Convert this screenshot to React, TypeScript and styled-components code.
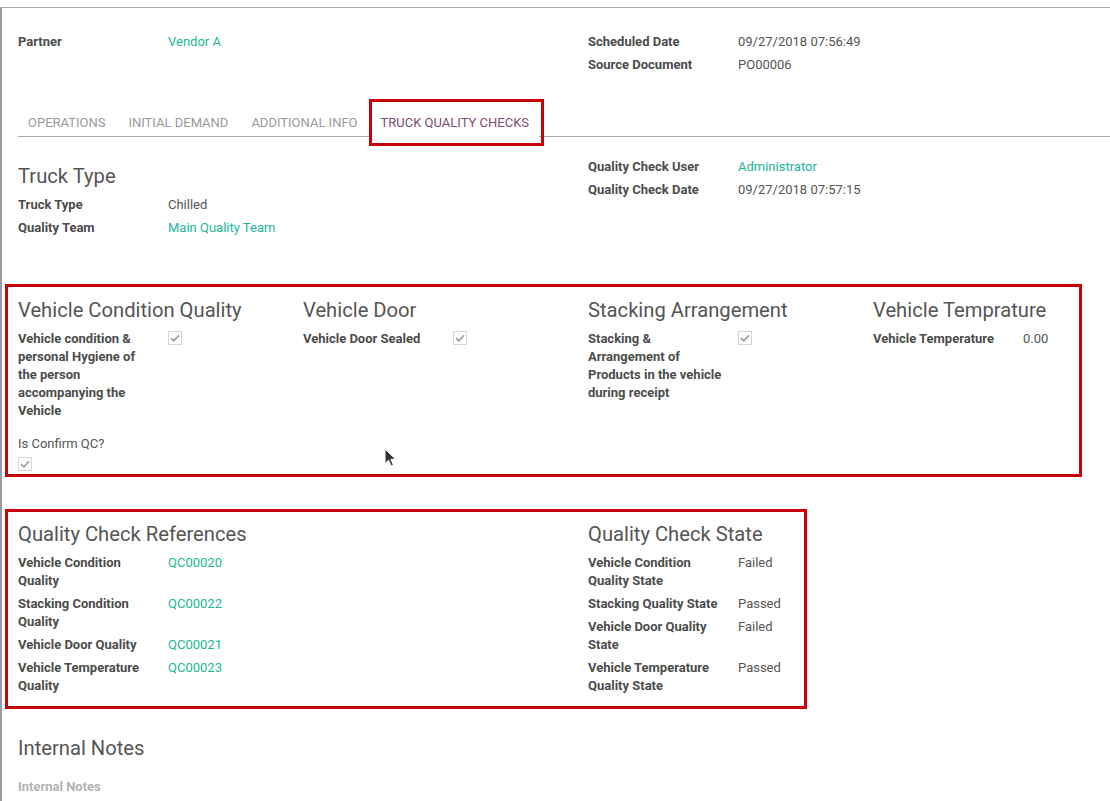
import React from 'react';
import styled, { createGlobalStyle, css } from 'styled-components';

const GlobalStyle = createGlobalStyle`
  html, body { margin: 0; padding: 0; overflow: hidden; background: #fff; }
  body {
    font-family: Roboto, "Liberation Sans", sans-serif;
    font-size: 13px;
    line-height: 18px;
    color: #4c4c4c;
  }
`;

const Sheet = styled.div`
  margin-top: 7px;
  border-top: 1px solid #a9a9a9;
  border-left: 2px solid #9b9b9b;
  padding: 21px 0 0 16px;
  height: calc(100vh - 7px);
  box-sizing: border-box;
`;

const Columns = styled.div<{ $cols: number; $w: number }>`
  display: grid;
  grid-template-columns: repeat(${(p) => p.$cols}, ${(p) => p.$w}px);
  align-items: start;
`;

const Section = styled.div``;

const Heading = styled.div<{ $mt?: number }>`
  font-size: 20.2px;
  line-height: 24px;
  color: #555;
  margin: ${(p) => p.$mt ?? 10}px 0 4px;
  white-space: nowrap;
`;

const FieldGroup = styled.div`
  display: grid;
  grid-template-columns: 150px 1fr;
  align-items: start;
`;

const Label = styled.div`
  font-weight: 700;
  color: #4c4c4c;
  padding: 4px 15px 1px 0;
`;

const Value = styled.div<{ $link?: boolean }>`
  padding: 4px 0 1px;
  color: ${(p) => (p.$link ? '#21b799' : '#555')};
  white-space: nowrap;
`;

const TabBar = styled.div`
  display: flex;
  margin-top: 23px;
  border-bottom: 1px solid #aaa;
`;

const Tab = styled.div<{ $active?: boolean }>`
  position: relative;
  padding: 16px 10px 4px;
  margin-right: 3px;
  text-transform: uppercase;
  white-space: nowrap;
  color: ${(p) => (p.$active ? '#7c4d70' : '#9a9a9a')};
  ${(p) =>
    p.$active &&
    css`
      background: #fff;
      margin-bottom: -1px;
      border-bottom: 1px solid #fff;
      &::after {
        content: '';
        position: absolute;
        left: -2px;
        right: -5px;
        top: 1px;
        bottom: -10px;
        border: 3px solid #c8000a;
      }
    `}
`;

const Pane = styled.div`
  padding-top: 17px;
`;

const Marked = styled.div<{ $w: number; $mt: number; $pb: number }>`
  position: relative;
  width: ${(p) => p.$w}px;
  box-sizing: border-box;
  margin: ${(p) => p.$mt}px 0 0 -13px;
  border: 3px solid #c8000a;
  padding: 0 0 ${(p) => p.$pb}px 10px;
`;

const StackLabel = styled.div`
  margin-top: 14px;
  color: #555;
`;

const CheckBoxEl = styled.span<{ $mt: number }>`
  display: flex;
  width: 14px;
  height: 14px;
  box-sizing: border-box;
  border: 1px solid #d6d6d6;
  align-items: center;
  justify-content: center;
  margin-top: ${(p) => p.$mt}px;
  background: #fff;
`;

const Cursor = styled.svg`
  position: absolute;
  left: 376px;
  top: 161px;
`;

const Placeholder = styled.div`
  margin-top: 18px;
  font-weight: 700;
  color: #b3b3b3;
`;

const Check: React.FC<{ mt?: number }> = ({ mt = 1 }) => (
  <CheckBoxEl $mt={mt}>
    <svg width="10" height="8" viewBox="0 0 10 8">
      <polyline points="1,4.2 3.8,6.8 9,1.2" fill="none" stroke="#9a9a9a" strokeWidth="1.6" />
    </svg>
  </CheckBoxEl>
);

type Row = { label: string; value?: string; link?: boolean; check?: boolean };

const Fields: React.FC<{ rows: Row[] }> = ({ rows }) => (
  <FieldGroup>
    {rows.map((r) => (
      <React.Fragment key={r.label}>
        <Label>{r.label}</Label>
        <Value $link={r.link}>{r.check ? <Check /> : r.value}</Value>
      </React.Fragment>
    ))}
  </FieldGroup>
);

export default function App() {
  return (
    <>
      <GlobalStyle />
      <Sheet>
        <Columns $cols={2} $w={570}>
          <Fields rows={[{ label: 'Partner', value: 'Vendor A', link: true }]} />
          <Fields
            rows={[
              { label: 'Scheduled Date', value: '09/27/2018 07:56:49' },
              { label: 'Source Document', value: 'PO00006' },
            ]}
          />
        </Columns>

        <TabBar>
          <Tab>Operations</Tab>
          <Tab>Initial Demand</Tab>
          <Tab>Additional Info</Tab>
          <Tab $active>Truck Quality Checks</Tab>
        </TabBar>

        <Pane>
          <Columns $cols={2} $w={570}>
            <Section>
              <Heading>Truck Type</Heading>
              <Fields
                rows={[
                  { label: 'Truck Type', value: 'Chilled' },
                  { label: 'Quality Team', value: 'Main Quality Team', link: true },
                ]}
              />
            </Section>
            <Fields
              rows={[
                { label: 'Quality Check User', value: 'Administrator', link: true },
                { label: 'Quality Check Date', value: '09/27/2018 07:57:15' },
              ]}
            />
          </Columns>

          <Marked $w={1077} $mt={46} $pb={3}>
            <Columns $cols={4} $w={285}>
              <Section>
                <Heading $mt={11}>Vehicle Condition Quality</Heading>
                <Fields
                  rows={[
                    {
                      label:
                        'Vehicle condition & personal Hygiene of the person accompanying the Vehicle',
                      check: true,
                    },
                  ]}
                />
              </Section>
              <Section>
                <Heading $mt={11}>Vehicle Door</Heading>
                <Fields rows={[{ label: 'Vehicle Door Sealed', check: true }]} />
              </Section>
              <Section>
                <Heading $mt={11}>Stacking Arrangement</Heading>
                <Fields
                  rows={[
                    {
                      label: 'Stacking & Arrangement of Products in the vehicle during receipt',
                      check: true,
                    },
                  ]}
                />
              </Section>
              <Section>
                <Heading $mt={11}>Vehicle Temprature</Heading>
                <Fields rows={[{ label: 'Vehicle Temperature', value: '0.00' }]} />
              </Section>
            </Columns>
            <StackLabel>Is Confirm QC?</StackLabel>
            <Check mt={4} />
            <Cursor width="13" height="19" viewBox="0 0 13 19">
              <path
                d="M1 1 L1 15.5 L4.6 12.2 L7.2 18 L9.4 17 L6.9 11.3 L11.6 11.3 Z"
                fill="#333"
                stroke="#fff"
                strokeWidth="1"
                strokeLinejoin="round"
              />
            </Cursor>
          </Marked>

          <Marked $w={802} $mt={32} $pb={10}>
            <Columns $cols={2} $w={570}>
              <Section>
                <Heading>Quality Check References</Heading>
                <Fields
                  rows={[
                    { label: 'Vehicle Condition Quality', value: 'QC00020', link: true },
                    { label: 'Stacking Condition Quality', value: 'QC00022', link: true },
                    { label: 'Vehicle Door Quality', value: 'QC00021', link: true },
                    { label: 'Vehicle Temperature Quality', value: 'QC00023', link: true },
                  ]}
                />
              </Section>
              <Section>
                <Heading>Quality Check State</Heading>
                <Fields
                  rows={[
                    { label: 'Vehicle Condition Quality State', value: 'Failed' },
                    { label: 'Stacking Quality State', value: 'Passed' },
                    { label: 'Vehicle Door Quality State', value: 'Failed' },
                    { label: 'Vehicle Temperature Quality State', value: 'Passed' },
                  ]}
                />
              </Section>
            </Columns>
          </Marked>

          <Heading $mt={27}>Internal Notes</Heading>
          <Placeholder>Internal Notes</Placeholder>
        </Pane>
      </Sheet>
    </>
  );
}
